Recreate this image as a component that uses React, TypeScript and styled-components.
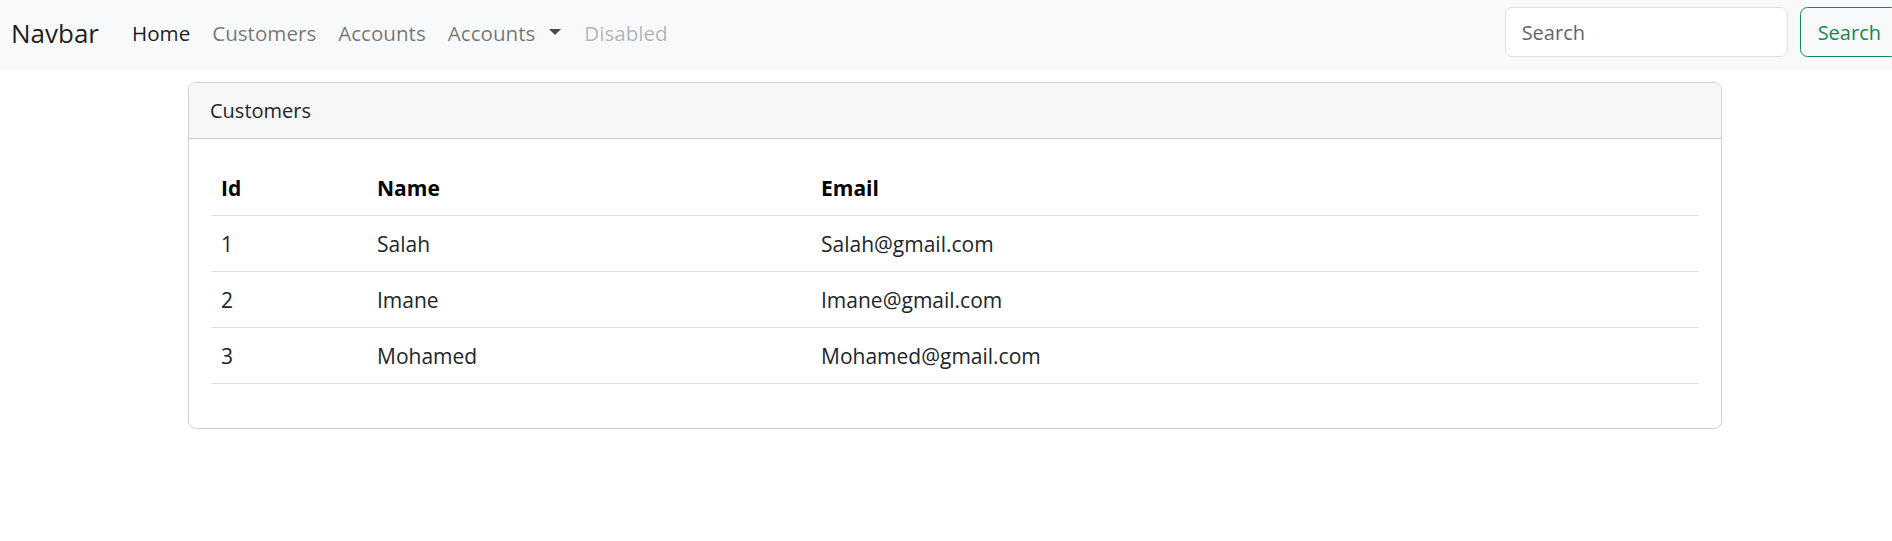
import React from 'react';
import styled, { createGlobalStyle } from 'styled-components';

type Customer = {
  id: number;
  name: string;
  email: string;
};

const customers: Customer[] = [
  { id: 1, name: 'Salah', email: 'Salah@gmail.com' },
  { id: 2, name: 'Imane', email: 'Imane@gmail.com' },
  { id: 3, name: 'Mohamed', email: 'Mohamed@gmail.com' },
];

const links = [
  { label: 'Home', state: 'active' },
  { label: 'Customers', state: 'normal' },
  { label: 'Accounts', state: 'normal' },
  { label: 'Accounts', state: 'normal', dropdown: true },
  { label: 'Disabled', state: 'disabled' },
] as const;

const App: React.FC = () => {
  return (
    <>
      <GlobalStyle />
      <Navbar>
        <Brand>Navbar</Brand>
        <NavList>
          {links.map((link, index) => (
            <NavLink key={index} $state={link.state}>
              {link.label}
              {'dropdown' in link && link.dropdown && <Caret />}
            </NavLink>
          ))}
        </NavList>
        <SearchForm>
          <SearchInput placeholder="Search" />
          <SearchButton>Search</SearchButton>
        </SearchForm>
      </Navbar>

      <Card>
        <CardHeader>Customers</CardHeader>
        <CardBody>
          <Table>
            <colgroup>
              <col style={{ width: 156 }} />
              <col style={{ width: 444 }} />
              <col />
            </colgroup>
            <thead>
              <tr>
                <Th>Id</Th>
                <Th>Name</Th>
                <Th>Email</Th>
              </tr>
            </thead>
            <tbody>
              {customers.map((c) => (
                <tr key={c.id}>
                  <Td>{c.id}</Td>
                  <Td>{c.name}</Td>
                  <Td>{c.email}</Td>
                </tr>
              ))}
            </tbody>
          </Table>
        </CardBody>
      </Card>
    </>
  );
};

export default App;

const GlobalStyle = createGlobalStyle`
  html, body {
    margin: 0;
    padding: 0;
    overflow: hidden;
    background: #ffffff;
    font-family: 'Open Sans', 'Noto Sans', sans-serif;
    color: #212529;
  }
  * {
    box-sizing: border-box;
  }
`;

const Navbar = styled.nav`
  height: 70px;
  padding: 7px 0 13px 11px;
  background: #f8f9fa;

  display: flex;
  align-items: center;
  white-space: nowrap;
`;

const Brand = styled.a`
  margin-top: 2px;
  margin-right: 22px;
  font-size: 26px;
  line-height: 1;
  color: rgba(0, 0, 0, 0.9);
`;

const NavList = styled.ul`
  margin: 2px 0 0;
  padding: 0;
  list-style: none;
  flex: 1;

  display: flex;
  align-items: center;
`;

const NavLink = styled.li<{ $state: 'active' | 'normal' | 'disabled' }>`
  padding: 0 11px;
  font-size: 20.6px;
  line-height: 30px;
  color: ${({ $state }) =>
    $state === 'active'
      ? 'rgba(0, 0, 0, 0.9)'
      : $state === 'disabled'
        ? 'rgba(0, 0, 0, 0.3)'
        : 'rgba(0, 0, 0, 0.55)'};

  display: flex;
  align-items: center;
`;

const Caret = styled.span`
  margin-left: 14px;
  margin-right: 1px;
  margin-top: -2px;
  width: 0;
  height: 0;
  border-top: 6px solid currentColor;
  border-left: 6px solid transparent;
  border-right: 6px solid transparent;
  color: rgba(0, 0, 0, 0.7);
`;

const SearchForm = styled.form`
  margin: 0 -7px 0 0;
  display: flex;
  align-items: center;
  gap: 12px;
`;

const SearchInput = styled.input`
  width: 283px;
  height: 50px;
  padding: 0 16px;
  border: 1px solid #dee2e6;
  border-radius: 7.5px;
  background: #ffffff;
  font-family: inherit;
  font-size: 20px;
  color: #212529;
  outline: none;

  &::placeholder {
    color: #5f6670;
  }
`;

const SearchButton = styled.button`
  height: 50px;
  padding: 0 17px;
  border: 1px solid #198754;
  border-radius: 7.5px;
  background: transparent;
  font-family: inherit;
  font-size: 20px;
  color: #198754;
`;

const Card = styled.section`
  margin: 12px 0 0 188px;
  width: 1534px;
  border: 1px solid rgba(0, 0, 0, 0.175);
  border-radius: 7.5px;
  overflow: hidden;
`;

const CardHeader = styled.header`
  height: 56px;
  padding: 0 21px;
  background: #f7f7f7;
  border-bottom: 1px solid rgba(0, 0, 0, 0.175);

  display: flex;
  align-items: center;
  font-size: 20px;
  color: #212529;
`;

const CardBody = styled.div`
  padding: 21px 22px 22px;
`;

const Table = styled.table`
  width: 100%;
  margin-bottom: 22px;
  border-collapse: collapse;
  table-layout: fixed;
  font-size: 21px;
`;

const Th = styled.th`
  height: 55px;
  padding: 2px 10px 0;
  text-align: left;
  font-weight: 700;
  color: #000000;
  border-bottom: 1px solid #dee2e6;
`;

const Td = styled.td`
  height: 56px;
  padding: 2px 10px 0;
  color: #212529;
  border-bottom: 1px solid #dee2e6;
`;
